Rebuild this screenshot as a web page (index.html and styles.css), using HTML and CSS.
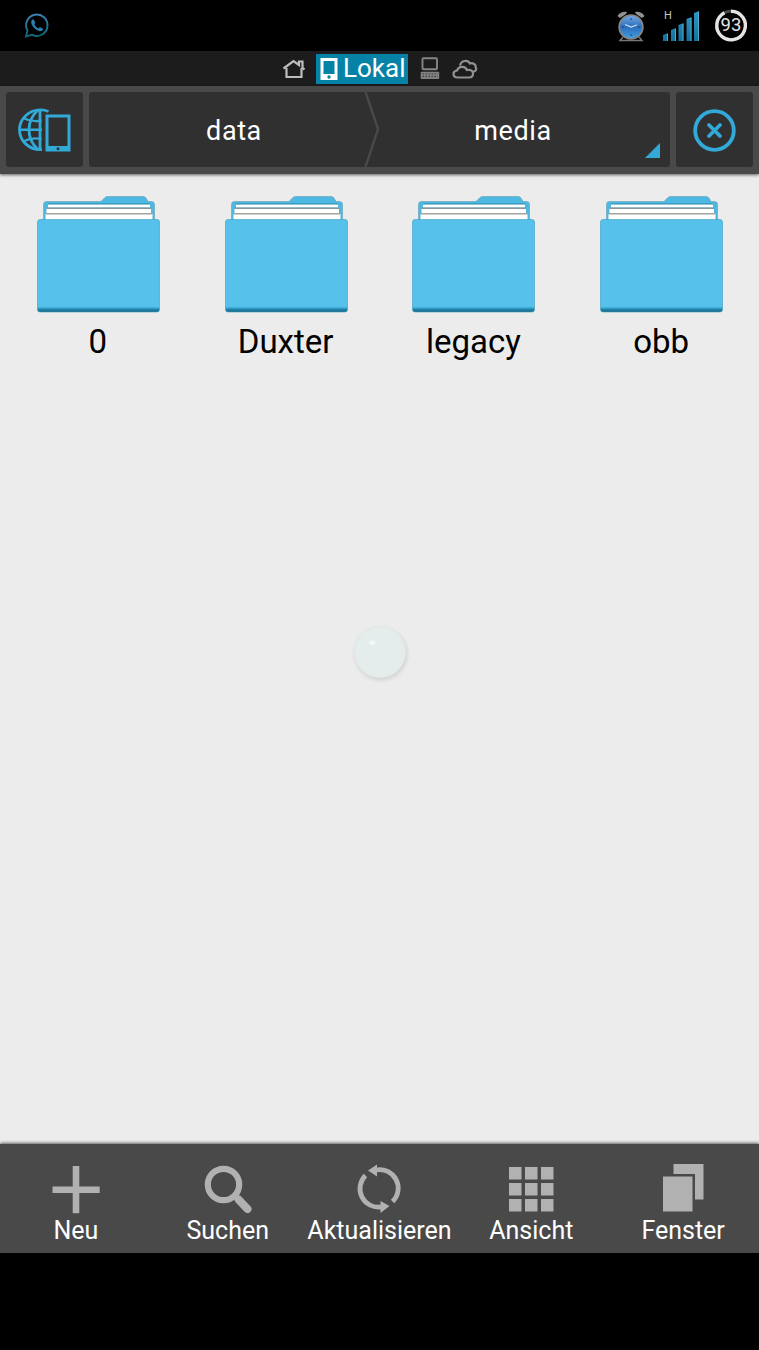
FILE: index.html
```html
<!DOCTYPE html>
<html lang="de">
<head>
    <meta charset="UTF-8">
    <meta name="viewport" content="width=device-width, initial-scale=1.0">
    <title>Dateimanager - media</title>
    <link rel="stylesheet" href="styles.css">
</head>
<body>
    <!-- Shared folder icon -->
    <svg class="defs" width="0" height="0">
        <defs>
            <linearGradient id="folderEdge" x1="0" y1="0" x2="0" y2="1">
                <stop offset="0" stop-color="#56c1ea"/>
                <stop offset="0.94" stop-color="#56c1ea"/>
                <stop offset="0.955" stop-color="#3ba9d3"/>
                <stop offset="0.975" stop-color="#1d7ea5"/>
                <stop offset="1" stop-color="#1b6988"/>
            </linearGradient>
            <symbol id="folder" viewBox="0 0 128 120">
                <path d="M8.500 30V9.500Q8.500 6.500 11.500 6.500H66L70 2.500Q71 1.500 73 1.500H108Q110 1.500 111 3L113 6.500H116.500Q119.500 6.500 119.500 9.500V30Z" fill="#4db8e1" stroke="#6ea6bb" stroke-width="0.700"/>
                <rect x="13" y="9" width="102" height="3.500" fill="#fff"/>
                <path d="M13 9H115" stroke="#2787a9" stroke-width="1"/>
                <rect x="11.500" y="13.500" width="104.500" height="4.500" fill="#fff"/>
                <path d="M11.500 13.300H116" stroke="#87979c" stroke-width="1.400"/>
                <rect x="10.500" y="19" width="107" height="6" fill="#fff"/>
                <path d="M10.500 18.700H117.500" stroke="#a3a3a0" stroke-width="1.600"/>
                <rect x="2.500" y="24.500" width="122" height="92.500" rx="2.500" fill="url(#folderEdge)" stroke="#3c9cc0" stroke-width="0.600"/>
            </symbol>
        </defs>
    </svg>

    <div class="status-bar">
        <svg class="whatsapp-icon" width="26" height="26" viewBox="0 0 26 26">
            <defs>
                <linearGradient id="chatTint" x1="0" y1="0" x2="0" y2="1">
                    <stop offset="0" stop-color="#3d7fb5"/>
                    <stop offset="1" stop-color="#0d6773"/>
                </linearGradient>
            </defs>
            <path d="M2 23.500L3.500 17.500A10.700 10.700 0 1 1 8 21.800Z" fill="none" stroke="url(#chatTint)" stroke-width="1.900"/>
            <path d="M8.500 6.500Q6.500 8 7.500 11Q9.500 16 15 18Q18 18.800 19.300 16L16 14L14.500 15.500Q11.500 14 10.300 11.300L11.300 9.800L9.800 6.500Z" fill="#2a7fae"/>
        </svg>
        <div class="status-right">
            <svg class="alarm-icon" width="28" height="32" viewBox="0 0 28 32">
                <defs>
                    <linearGradient id="clockFace" x1="0" y1="0" x2="0" y2="1">
                        <stop offset="0" stop-color="#75a9e2"/>
                        <stop offset="0.500" stop-color="#2b6dbb"/>
                        <stop offset="1" stop-color="#3f9fe3"/>
                    </linearGradient>
                </defs>
                <path d="M0.500 6Q4 1 10 2L9 4L3 8Z" fill="#929292"/>
                <path d="M27.500 6Q24 1 18 2L19 4L25 8Z" fill="#929292"/>
                <path d="M6 27L3 30.500H25L22 27" fill="none" stroke="#777" stroke-width="1.500"/>
                <circle cx="14" cy="17" r="11.800" fill="url(#clockFace)" stroke="#858585" stroke-width="1.800"/>
                <path d="M8 14.500L14 17L20 15" fill="none" stroke="#c8e0f5" stroke-width="1.200"/>
                <path d="M14 8V10M14 24V26M5 17H7M21 17H23" stroke="#16437c" stroke-width="1"/>
            </svg>
            <div class="signal">
                <span class="signal-type">H</span>
                <svg width="37" height="32" viewBox="0 0 37 32">
                    <defs>
                        <linearGradient id="bar" x1="0" y1="0" x2="0" y2="1">
                            <stop offset="0" stop-color="#2f97c4"/>
                            <stop offset="1" stop-color="#14719c"/>
                        </linearGradient>
                    </defs>
                    <path d="M0 25L5 23V31H0ZM8 20L13 18V31H8ZM15.500 15L20.500 13V31H15.500ZM23.500 9L28.500 7V31H23.500ZM31 3L36 1V31H31Z" fill="url(#bar)"/>
                    <path d="M4.500 24V31M12.500 19V31M20 14V31M28 8V31M35.500 2V31" stroke="#62b4d6" stroke-width="0.800"/>
                </svg>
            </div>
            <div class="battery">
                <svg width="34" height="34" viewBox="0 0 34 34">
                    <circle cx="17" cy="16.500" r="14.300" fill="none" stroke="#4a4a4a" stroke-width="2.800"/>
                    <path d="M17 2.200A14.300 14.300 0 1 1 10.500 3.800" fill="none" stroke="#e4e4e4" stroke-width="3.400"/>
                </svg>
                <span class="battery-level">93</span>
            </div>
        </div>
    </div>

    <div class="tabs">
        <svg class="tab-icon" width="24" height="22" viewBox="0 0 24 22">
            <path d="M1.500 10.500L11.500 3L17 7V3.500H20.500V10L22.500 11.500" fill="none" stroke="#bdbdbd" stroke-width="2.200"/>
            <path d="M4.500 10V19H19.500V10" fill="none" stroke="#bdbdbd" stroke-width="2.200"/>
        </svg>
        <div class="tab-active">
            <svg width="18" height="24" viewBox="0 0 18 24">
                <path fill-rule="evenodd" d="M0.500 1H17.500V23H0.500ZM3.500 4V17H14.500V4ZM9 18.300A1.700 1.700 0 1 0 9.010 18.300Z" fill="#fff"/>
            </svg>
            <span>Lokal</span>
        </div>
        <svg class="tab-icon" width="20" height="24" viewBox="0 0 20 24">
            <rect x="2.500" y="1.300" width="14.500" height="11" rx="1" fill="none" stroke="#858585" stroke-width="1.900"/>
            <rect x="0.700" y="14.700" width="18.500" height="7.300" rx="1" fill="#808080"/>
            <path d="M2.500 17H18M2.500 19.500H18" stroke="#3c3c3c" stroke-width="1" stroke-dasharray="1.500 1.500"/>
        </svg>
        <svg class="tab-icon" width="26" height="20" viewBox="0 0 26 20">
            <path d="M8 6.500Q9 2.500 12.500 2Q16 1.200 18 4.500Q20 3.500 22 5Q24 6 23.500 8Q25.500 11 22 12.500L20 12.700" fill="none" stroke="#919191" stroke-width="2.200"/>
            <path d="M6 18.500Q1.500 18.500 1.500 15Q1.500 12 5 11.500Q6.500 7.500 10.500 7.800Q14 8 14.800 11Q20.500 10 21 14.500Q21 18.500 17 18.500Z" fill="#1c1c1c" stroke="#919191" stroke-width="2.200"/>
        </svg>
    </div>

    <div class="path-bar">
        <button class="square-btn" aria-label="Speicherort">
            <svg width="54" height="46" viewBox="0 0 54 46">
                <g fill="none" stroke="#32a9d6" stroke-width="2.800">
                    <path d="M30.500 4.500Q27 2.900 22.500 2.900A21 19.900 0 0 0 22.500 42.700H24"/>
                    <path d="M22 2.900V42.700"/>
                    <path d="M20 3Q11 11 11 22.800T20 42.500"/>
                    <path d="M5 11Q14 15.500 23.500 13.500M1 22.800H24M5 34.500Q14 30 23.500 32" stroke-width="2.400"/>
                </g>
                <path fill-rule="evenodd" d="M27.500 7.500H52.500V44.500H27.500ZM30.500 10.500V39H49.500V10.500ZM40 40.300A1.500 1.500 0 1 0 40.010 40.300Z" fill="#32a9d6"/>
            </svg>
        </button>
        <div class="breadcrumb">
            <div class="crumb crumb-first">data</div>
            <svg class="crumb-arrow" width="16" height="75" viewBox="0 0 16 75">
                <path d="M1.500 0L14 37L1.500 75" fill="none" stroke="#494949" stroke-width="2.400"/>
            </svg>
            <div class="crumb crumb-last">media</div>
            <svg class="crumb-corner" width="15" height="15" viewBox="0 0 15 15">
                <path d="M15 0V15H0Z" fill="#32a9d6"/>
            </svg>
        </div>
        <button class="square-btn" aria-label="Schließen">
            <svg width="44" height="44" viewBox="0 0 44 44">
                <circle cx="21.500" cy="22.500" r="19.300" fill="none" stroke="#32a9d6" stroke-width="3.800"/>
                <path d="M16 17L27 28M27 17L16 28" stroke="#32a9d6" stroke-width="3.800" stroke-linecap="round"/>
            </svg>
        </button>
    </div>

    <div class="files">
        <div class="file">
            <svg width="128" height="120"><use href="#folder"/></svg>
            <span>0</span>
        </div>
        <div class="file">
            <svg width="128" height="120"><use href="#folder"/></svg>
            <span>Duxter</span>
        </div>
        <div class="file">
            <svg width="128" height="120"><use href="#folder"/></svg>
            <span>legacy</span>
        </div>
        <div class="file">
            <svg width="128" height="120"><use href="#folder"/></svg>
            <span>obb</span>
        </div>
        <div class="touch-bubble"></div>
    </div>

    <div class="toolbar">
        <div class="tool">
            <svg width="50" height="50" viewBox="0 0 50 50">
                <path d="M21.700 2H28.300V22.500H48.700V29H28.300V49.300H21.700V29H1.500V22.500H21.700Z" fill="#b1b1b1"/>
            </svg>
            <span>Neu</span>
        </div>
        <div class="tool">
            <svg width="50" height="50" viewBox="0 0 50 50">
                <circle cx="20.500" cy="20.500" r="15.700" fill="none" stroke="#b1b1b1" stroke-width="6.200"/>
                <path d="M30 29.500L35 34.500" stroke="#b1b1b1" stroke-width="4"/>
                <path d="M35.500 35.500L44.500 45" stroke="#b1b1b1" stroke-width="8" stroke-linecap="round"/>
            </svg>
            <span>Suchen</span>
        </div>
        <div class="tool">
            <svg width="50" height="50" viewBox="0 0 50 50">
                <g fill="none" stroke="#b1b1b1" stroke-width="4.800">
                    <path d="M22 6A18.500 18.500 0 0 1 38.500 37.500"/>
                    <path d="M11.500 11.500A18.500 18.500 0 0 0 27 43"/>
                </g>
                <path d="M14 6.500L23 0.500V12.500ZM35.500 42L26.500 37V49Z" fill="#b1b1b1"/>
            </svg>
            <span>Aktualisieren</span>
        </div>
        <div class="tool">
            <svg width="50" height="50" viewBox="0 0 50 50">
                <path d="M3 3h12.500v12.500h-12.500zM19 3h12.500v12.500h-12.500zM35 3h12.500v12.500h-12.500zM3 19h12.500v12.500h-12.500zM19 19h12.500v12.500h-12.500zM35 19h12.500v12.500h-12.500zM3 35h12.500v12.500h-12.500zM19 35h12.500v12.500h-12.500zM35 35h12.500v12.500h-12.500z" fill="#b1b1b1"/>
            </svg>
            <span>Ansicht</span>
        </div>
        <div class="tool">
            <svg width="50" height="50" viewBox="0 0 50 50">
                <path d="M15.500 0H45.500V35.500H37V10H15.500ZM5 12.500H34.500V47.500H5Z" fill="#b1b1b1"/>
            </svg>
            <span>Fenster</span>
        </div>
    </div>
</body>
</html>
```
FILE: styles.css
```css
* {
    margin: 0;
    padding: 0;
    box-sizing: border-box;
    font-family: Roboto, 'Liberation Sans', sans-serif;
}

body {
    background-color: #000;
    color: #fff;
    height: 1350px;
    display: flex;
    flex-direction: column;
    overflow: hidden;
}

svg {
    display: block;
    flex-shrink: 0;
    overflow: visible;
}

.defs {
    position: absolute;
}

/* Android status bar */
.status-bar {
    height: 51px;
    padding: 0 11px 0 24px;
    display: flex;
    justify-content: space-between;
    align-items: center;
}

.status-right {
    display: flex;
    align-items: center;
}

.signal {
    position: relative;
    margin: 0 14px 0 18px;
}

.signal-type {
    position: absolute;
    left: 1px;
    top: 1px;
    font-size: 11px;
    line-height: 10px;
    color: #c5c5c5;
}

.battery {
    position: relative;
}

.battery-level {
    position: absolute;
    inset: 0;
    line-height: 33px;
    text-align: center;
    font-size: 18.500px;
    color: #e4e4e4;
}

/* Location tabs */
.tabs {
    height: 35px;
    padding-left: 282px;
    display: flex;
    align-items: center;
    background-color: #1c1c1c;
}

.tab-active {
    height: 30px;
    width: 92px;
    margin: 0 12px 0 10px;
    padding-left: 4px;
    display: flex;
    align-items: center;
    gap: 5px;
    background-color: #0682a6;
    font-size: 26px;
    line-height: 28px;
}

.tab-active span {
    padding-bottom: 2px;
}

.tab-icon + .tab-icon {
    margin-left: 12px;
}

/* Path bar */
.path-bar {
    height: 88px;
    padding: 6px 6px 7px;
    display: flex;
    gap: 6px;
    background-color: #494949;
    box-shadow: 0 1px 3px rgba(0, 0, 0, 0.6);
    position: relative;
    z-index: 1;
}

.square-btn {
    width: 77px;
    height: 75px;
    border: none;
    border-radius: 3px;
    background-color: #303030;
    display: flex;
    align-items: center;
    justify-content: center;
}

.breadcrumb {
    flex: 1;
    height: 75px;
    display: flex;
    align-items: center;
    position: relative;
    border-radius: 3px;
    background-color: #303030;
    font-size: 27px;
    letter-spacing: 0.6px;
}

.crumb {
    text-align: center;
    padding-top: 2px;
}

.crumb-first {
    width: 275px;
    padding-left: 15px;
}

.crumb-last {
    flex: 1;
    padding-right: 24px;
}

.crumb-corner {
    position: absolute;
    right: 10px;
    bottom: 9px;
}

/* File grid */
.files {
    height: 970px;
    padding: 21px 4px 0;
    display: grid;
    grid-template-columns: repeat(4, 1fr);
    align-items: start;
    position: relative;
    background-color: #ebeceb;
    color: #000;
}

.file {
    display: flex;
    flex-direction: column;
    align-items: center;
    font-size: 33px;
}

.file svg {
    margin-left: 2px;
}

.file span {
    margin-top: 7px;
    line-height: 40px;
}

.touch-bubble {
    position: absolute;
    left: 354px;
    top: 452px;
    width: 52px;
    height: 52px;
    border-radius: 50%;
    background: radial-gradient(ellipse 5px 3px at 35% 32%, #fafffd, transparent), #e4edeb;
    box-shadow: 1px 2px 4px rgba(0, 0, 0, 0.12), inset 0 0 3px #d9e7e3;
}

/* Bottom toolbar */
.toolbar {
    height: 109px;
    padding-top: 20px;
    display: grid;
    grid-template-columns: repeat(5, 1fr);
    align-items: start;
    background-color: #494949;
    box-shadow: 0 -1px 3px rgba(0, 0, 0, 0.6);
    position: relative;
}

.tool {
    display: flex;
    flex-direction: column;
    align-items: center;
    font-size: 25px;
}

.tool span {
    line-height: 34px;
}
```
